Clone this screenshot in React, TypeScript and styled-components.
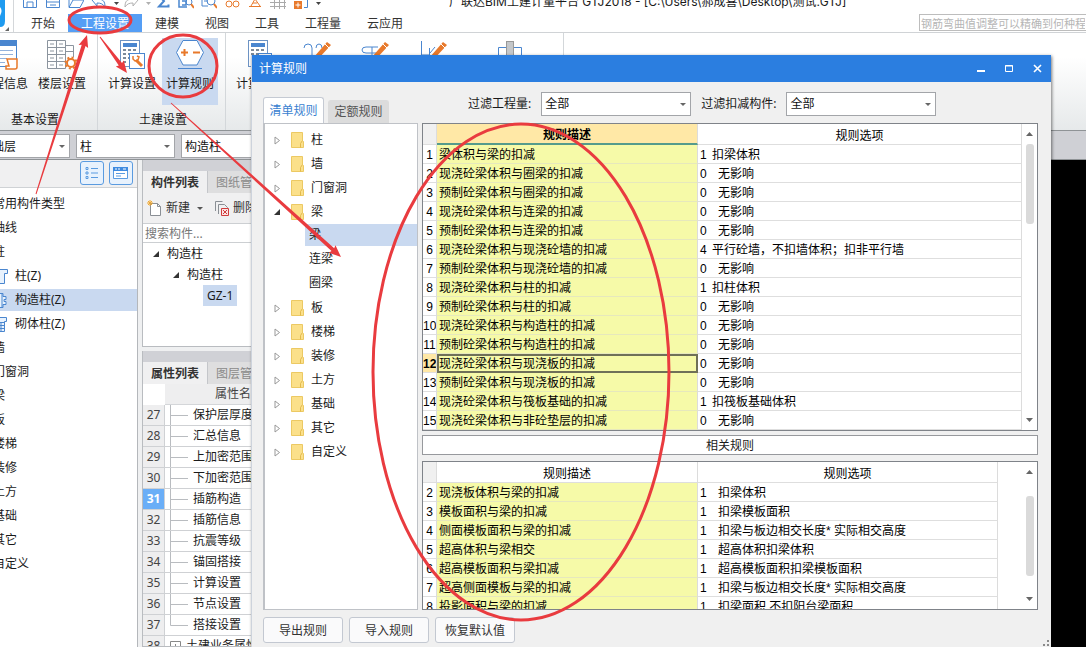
import React from 'react';
import styled, { createGlobalStyle, css } from 'styled-components';

const GlobalStyle = createGlobalStyle`
  * { box-sizing: border-box; }
  body { margin: 0; background: #000; }
  body, button, input, select {
    font-family: "Noto Sans", "Noto Sans CJK SC", sans-serif;
    font-size: 12px;
    line-height: 16px;
    color: #1a1a1a;
  }
  button { border: 0; padding: 0; margin: 0; background: none; white-space: nowrap; }
  ul { list-style: none; margin: 0; padding: 0; }
  svg { display: block; flex: none; }
`;

const blue = '#4a86cf';
const orange = '#e8792b';

/* ---------- main window ---------- */

const Desktop = styled.div`
  position: relative;
  display: flex;
  flex-direction: column;
  height: 100vh;
  overflow: hidden;
  background: #fff;
`;

const TopArea = styled.header`
  display: flex;
  flex: none;
  border-bottom: 1px solid #d0d3d6;
`;

const LogoCell = styled.div`
  width: 14px;
  flex: none;
  border-right: 1px solid #d4d7da;
`;

const TopRows = styled.div`
  flex: 1;
  min-width: 0;
`;

const CaptionRow = styled.div`
  display: flex;
  align-items: flex-end;
  height: 14px;
  padding: 0 0 5px 8px;
  overflow: hidden;
`;

const QuickButton = styled.button<{ $caret?: boolean }>`
  width: ${p => (p.$caret ? 9 : 23)}px;
  height: 16px;
  flex: none;
`;

const Caption = styled.h1`
  margin: 0 0 0 124px;
  font-family: Inter, "Noto Sans CJK SC", sans-serif;
  font-size: 12px;
  font-weight: 400;
  line-height: 14px;
  white-space: nowrap;
`;

const MenuRow = styled.div`
  display: flex;
  height: 18px;
  padding-left: 4px;
`;

const MenuTab = styled.button<{ $active?: boolean }>`
  padding: 2px 13px 0;
  color: ${p => (p.$active ? '#fff' : '#333')};
  background: ${p => (p.$active ? '#559ef5' : 'transparent')};
`;

const HelpSearch = styled.input`
  width: 167px;
  height: 17px;
  margin-left: auto;
  padding: 1px 1px 0;
  font-size: 11px;
  border: 1px solid #bdbdbd;
  border-right: 0;
  &::placeholder { color: #b5b5b5; opacity: 1; }
`;

const Ribbon = styled.div`
  display: flex;
  flex: none;
  height: 98px;
  background: linear-gradient(#fff 25%, #e6e9ea);
  border-bottom: 1px solid #8f9396;
`;

const RibbonGroup = styled.section<{ $cut?: boolean }>`
  display: flex;
  flex-direction: column;
  flex: none;
  align-items: center;
  padding: 5px 7px 0 ${p => (p.$cut ? 0 : 6)}px;
  margin-left: ${p => (p.$cut ? -24 : 0)}px;
  border-right: 1px solid #d3d7da;
`;

const RibbonItems = styled.div`
  display: flex;
  gap: 2px;
`;

const RibbonItem = styled.button<{ $active?: boolean; $wide?: boolean }>`
  display: flex;
  flex-direction: column;
  align-items: center;
  gap: 6px;
  width: ${p => (p.$wide ? 92 : 56)}px;
  height: 67px;
  padding-top: 1px;
  background: ${p => (p.$active ? '#c9d9f0' : 'transparent')};
`;

const GroupName = styled.span`
  margin-top: 7px;
  padding-left: 4px;
`;

const FilterBar = styled.div`
  display: flex;
  flex: none;
  gap: 6px;
  height: 29px;
  padding: 3px 0 2px;
  margin-left: -24px;
  background: #cfd0d5;
  border-bottom: 1px solid #8f9396;
`;

const SelectBox = styled.span<{ $width: number }>`
  position: relative;
  display: block;
  flex: none;
  width: ${p => p.$width}px;
  height: 24px;
  select {
    width: 100%;
    height: 100%;
    padding: 1px 3px 0;
    appearance: none;
    color: #111;
    background: #fff;
    border: 1px solid #a3a5a9;
    border-radius: 0;
  }
  svg {
    position: absolute;
    right: 5px;
    top: 11px;
    pointer-events: none;
  }
`;

const Workspace = styled.div`
  display: flex;
  flex: 1;
  min-height: 0;
  background: #000;
`;

/* ---------- component type column ---------- */

const TypePanel = styled.nav`
  width: 138px;
  flex: none;
  overflow: hidden;
  background: #fff;
  border-right: 1px solid #b4b7bb;
`;

const TypeTools = styled.div`
  display: flex;
  justify-content: flex-end;
  gap: 5px;
  height: 28px;
  padding: 1px 4px 0 0;
  background: #f0f0f1;
  border-bottom: 1px solid #cfd2d5;
`;

const ToggleView = styled.button`
  display: grid;
  place-items: center;
  width: 24px;
  height: 24px;
  background: #e8f2fd;
  border: 1px solid #5a9be0;
  border-radius: 3px;
`;

const TypeList = styled.ul`
  padding-top: 5px;
  margin-left: -7px;
`;

const TypeRow = styled.li<{ $active?: boolean }>`
  display: flex;
  align-items: center;
  gap: 6px;
  height: 22px;
  margin-bottom: 2px;
  white-space: nowrap;
  background: ${p => (p.$active ? '#c9d9f0' : 'transparent')};
`;

/* ---------- component list and property columns ---------- */

const Docks = styled.div`
  display: flex;
  flex-direction: column;
  width: 190px;
  flex: none;
  gap: 4px;
  padding-left: 4px;
  background: #eff0f1;
`;

const Dock = styled.section<{ $grow?: boolean }>`
  flex: ${p => (p.$grow ? '1' : 'none')};
  height: ${p => (p.$grow ? 'auto' : '187px')};
  min-height: 0;
  overflow: hidden;
  background: #fff;
  border: 1px solid #b9bcc0;
  border-top: 0;
`;

const DockTabs = styled.div`
  display: flex;
  height: 33px;
  padding-top: 11px;
  background: #d0d1d6;
`;

const DockTab = styled.button<{ $active?: boolean }>`
  padding: 2px 8px 0;
  line-height: 20px;
  font-weight: ${p => (p.$active ? 700 : 400)};
  color: ${p => (p.$active ? '#333' : '#8a8a8a')};
  background: ${p => (p.$active ? '#f0f0f1' : '#dededf')};
  border-right: 1px solid #c4c6ca;
`;

const DockTools = styled.div`
  display: flex;
  align-items: center;
  gap: 5px;
  height: 31px;
  padding-left: 4px;
  background: #f0f0f1;
  border-bottom: 1px solid #cccfd2;
`;

const DockTool = styled.button`
  display: flex;
  align-items: center;
  gap: 4px;
  margin-right: 2px;
  color: #333;
`;

const DockSearch = styled.input`
  display: block;
  width: 100%;
  height: 19px;
  padding: 0 2px;
  border: 0;
  border-bottom: 1px solid #cccfd2;
  &::placeholder { color: #777; opacity: 1; }
`;

const PartTree = styled.ul``;

const PartRow = styled.li<{ $level: number }>`
  display: flex;
  align-items: center;
  gap: 8px;
  height: 21px;
  padding-left: ${p => 10 + p.$level * 20}px;
  white-space: nowrap;
`;

const PartName = styled.span<{ $active?: boolean }>`
  ${p => p.$active && css`
    margin-left: 2px;
    padding: 0 4px;
    line-height: 21px;
    background: #c9d9f0;
  `}
`;

const PropTable = styled.table`
  width: 100%;
  table-layout: fixed;
  border-spacing: 0;
  white-space: nowrap;
  th, td { padding: 0; font-weight: 400; text-align: left; overflow: hidden; }
  thead th { line-height: 20px; }
  thead th + th { padding-left: 50px; color: #444; background: #eeeeef; border-bottom: 1px solid #d4d6d9; }
  tbody td { line-height: 20px; border-bottom: 1px solid #cfd1d4; }
`;

const PropIndex = styled.th<{ $active?: boolean }>`
  && {
    line-height: 20px;
    text-align: center;
    color: ${p => (p.$active ? '#fff' : '#444')};
    font-weight: ${p => (p.$active ? 700 : 400)};
    background: ${p => (p.$active ? '#6aaef7' : '#eeeeef')};
    border-right: 1px solid #cfd1d4;
    border-bottom: 1px solid #cfd1d4;
  }
`;

const PropName = styled.span`
  display: flex;
  align-items: center;
  gap: 5px;
  height: 20px;
  padding-left: 5px;
`;

/* ---------- rule dialog ---------- */

const Dialog = styled.div`
  position: absolute;
  left: 251px;
  right: 35px;
  top: 55px;
  bottom: 0;
  display: flex;
  flex-direction: column;
  background: #f0f0f0;
  border-left: 1px solid #cdd3dc;
  box-shadow: 1px 1px 3px rgba(0, 0, 0, 0.5);
`;

const DialogBar = styled.div`
  display: flex;
  align-items: center;
  flex: none;
  height: 27px;
  padding-left: 7px;
  background: #2b7ee0;
`;

const DialogTitle = styled.h2`
  flex: 1;
  margin: 0;
  font-size: 12px;
  font-weight: 400;
  color: #fff;
`;

const WindowButton = styled.button`
  display: grid;
  place-items: center;
  width: 28px;
  height: 27px;
`;

const DialogBody = styled.div`
  display: grid;
  grid-template-columns: 155px minmax(0, 1fr);
  grid-template-rows: 41px minmax(0, 1fr);
  column-gap: 4px;
  flex: 1;
  min-height: 0;
  padding: 0 13px 0 11px;
`;

const RuleTabs = styled.div`
  display: flex;
  align-items: flex-end;
  gap: 4px;
`;

const RuleTab = styled.button<{ $active?: boolean }>`
  width: 61px;
  height: ${p => (p.$active ? 26 : 23)}px;
  color: ${p => (p.$active ? '#3a7fd0' : '#555')};
  background: ${p => (p.$active ? '#fff' : '#dcdcdc')};
  border: 1px solid ${p => (p.$active ? '#c5cad3' : '#dcdcdc')};
  border-bottom: 0;
  border-radius: 3px 3px 0 0;
`;

const Filters = styled.div`
  display: flex;
  align-items: center;
  gap: 10px;
  padding: 2px 0 0 46px;
  white-space: nowrap;
`;

const RuleTree = styled.ul`
  padding-top: 4px;
  background: #fff;
  border: 1px solid #bfc2c7;
  border-left-width: 2px;
  overflow: hidden;
`;

const RuleNode = styled.li`
  display: flex;
  align-items: center;
  height: 24px;
  padding-left: 9px;
`;

const Expander = styled.span`
  width: 7px;
  margin-right: 10px;
`;

const NodeName = styled.span`
  margin-left: 7px;
`;

const RuleLeaf = styled.li<{ $active?: boolean }>`
  height: 22px;
  margin: 0 0 2px 40px;
  padding-left: 4px;
  line-height: 22px;
  background: ${p => (p.$active ? '#c9d9f0' : 'transparent')};
`;

const RuleArea = styled.div`
  display: flex;
  flex-direction: column;
  min-height: 0;
`;

const GridFrame = styled.div<{ $grow?: boolean }>`
  display: flex;
  flex: ${p => (p.$grow ? '1' : 'none')};
  min-height: 0;
  overflow: hidden;
  background: #fff;
  border: 1px solid #7f8389;
`;

const GridView = styled.div<{ $inset?: boolean }>`
  flex: 1;
  min-width: 0;
  padding-right: ${p => (p.$inset ? 24 : 0)}px;
`;

const RuleTable = styled.table`
  width: 100%;
  table-layout: fixed;
  border-spacing: 0;
  font-family: "Liberation Sans", "Noto Sans CJK SC", sans-serif;
  color: #000;
  white-space: nowrap;
  th, td {
    padding: 2px 0 0;
    overflow: hidden;
    line-height: 16px;
    font-weight: 400;
    text-align: left;
    border-right: 1px solid #dcdcdc;
    border-bottom: 1px solid #dedede;
  }
  thead th { height: 21px; padding-top: 4px; text-align: center; }
  thead th:first-child { background: #f0f0f0; }
`;

const DescHead = styled.th<{ $active?: boolean }>`
  ${p => p.$active && css`
    && {
      padding-top: 3px;
      font-weight: 700;
      background: #ffe8a6;
      border-bottom: 2px solid #559b8c;
    }
  `}
`;

const RowIndex = styled.th<{ $active?: boolean }>`
  && {
    text-align: center;
    font-weight: ${p => (p.$active ? 700 : 400)};
    background: ${p => (p.$active ? '#ffe8a6' : '#fff')};
  }
`;

const DescCell = styled.td<{ $active?: boolean }>`
  && {
    padding-left: 2px;
    background: #f6faa8;
    border-bottom-color: #e6e8bd;
    outline: ${p => (p.$active ? '2px solid #6f7058' : 'none')};
    outline-offset: -2px;
  }
`;

const OptionCell = styled.td`
  && { padding-left: 2px; }
`;

const OptionCode = styled.span<{ $narrow?: boolean }>`
  display: inline-block;
  width: ${p => (p.$narrow ? 12 : 18)}px;
`;

const ScrollTrack = styled.div`
  display: flex;
  flex-direction: column;
  align-items: center;
  width: 15px;
  flex: none;
  padding: 7px 0;
`;

const ScrollThumb = styled.div<{ $offset: number }>`
  width: 8px;
  height: 80px;
  margin: ${p => p.$offset}px 0 auto;
  background: #dadada;
  border-radius: 3px;
`;

const RelatedTitle = styled.h3`
  flex: none;
  height: 20px;
  margin: 4px 0 6px;
  padding-top: 1px;
  font-size: 12px;
  font-weight: 400;
  line-height: 18px;
  text-align: center;
  background: #fff;
  border: 1px solid #97999d;
`;

const DialogFooter = styled.footer`
  display: flex;
  flex: none;
  gap: 6px;
  padding: 7px 0 4px 11px;
`;

const FooterButton = styled.button`
  width: 80px;
  height: 26px;
  padding-top: 1px;
  color: #333;
  background: #fafafb;
  border: 1px solid #c3c8d1;
  border-radius: 3px;
`;

const SizeGrip = styled.svg`
  margin: auto 1px -4px auto;
`;

const Notes = styled.svg`
  position: absolute;
  left: 0;
  top: 0;
  pointer-events: none;
`;

/* ---------- drawings ---------- */

const Down = ({ color = '#555' }: { color?: string }) => (
  <svg width="6" height="3" viewBox="0 0 6 3"><path d="M0 0h6L3 3z" fill={color} /></svg>
);

const ScrollArrow = ({ up }: { up?: boolean }) => (
  <svg width="7" height="5" viewBox="0 0 7 5"><path d={up ? 'M0 5h7L3.500 1z' : 'M0 0h7L3.500 4z'} fill="#666" /></svg>
);

const Corner = () => (
  <svg width="6" height="6" viewBox="0 0 6 6"><path d="M6 0v6H0z" fill="#333" /></svg>
);

const Folder = () => (
  <svg width="13" height="16" viewBox="0 0 13 16">
    <path d="M.5.5h11v8l1 1v6H.5z" fill="#fbe08a" stroke="#ecc963" />
    <path d="M9.500 15.500v-4l2-3" fill="none" stroke="#e3b94c" />
  </svg>
);

const quick: Array<{ label: string; art?: React.ReactNode; caret?: string }> = [
  { label: '保存', art: <path d="M1.500 0v14.500h13V0M5 14V9h6v5" fill="none" stroke={blue} /> },
  { label: '另存', art: <path d="M1.500 0v14.500h13V0M1 9h14M5 12h6" fill="none" stroke={blue} /> },
  { label: '打开', art: <path d="M1 14.500L5 7h11l-4 7.500zM1 14V2" fill="none" stroke={blue} /> },
  { label: '撤销', art: <path d="M1 7l5-4v3c6 0 8 2 8 8-2-3-4-4-8-4v3z" fill="none" stroke={blue} /> },
  { label: '撤销列表', caret: '#444' },
  { label: '恢复', art: <path d="M15 7l-5-4v3c-6 0-8 2-8 8 2-3 4-4 8-4v3z" fill="none" stroke="#b0b0b0" /> },
  { label: '恢复列表', caret: '#b0b0b0' },
  { label: '汇总', art: <path d="M13 3H4l5 5-5 5.500h9.500v-2" fill="none" stroke={blue} strokeWidth="2" /> },
  { label: '查看', art: <><path d="M1 0v14h8M4 8h4v4H4M11 2v4" fill="none" stroke={blue} strokeWidth="1.500" /><circle cx="11" cy="9" r="3" fill="none" stroke={blue} /><path d="M13 11l3 4" stroke={orange} strokeWidth="2" /></> },
  { label: '查找', art: <><path d="M1 0v13h6M3 8h4M14 0v6" fill="none" stroke={blue} /><circle cx="10" cy="8" r="4" fill="none" stroke={blue} /><path d="M13 11l3 4" stroke={orange} strokeWidth="2" /></> },
  { label: '三维', art: <><circle cx="5" cy="11" r="3" fill="none" stroke={orange} /><circle cx="12" cy="11" r="3" fill="none" stroke={orange} /><path d="M3 5h11" stroke={orange} /></> },
  { label: '测量', art: <path d="M2 13.500h12M4 13l4-7 5 7M6 10h4" fill="none" stroke={orange} /> },
  { label: '轴网', art: <path d="M0 9.500h16M0 13.500h16M4.500 4v12M9.500 4v12M14.500 4v12" stroke="#aaa" /> },
  { label: '新增', art: <><rect x="1" y="8" width="8" height="8" fill={orange} /><path d="M5 9.500v5M2.500 12h5" stroke="#fff" /><path d="M11 14.500h3.500V3" fill="none" stroke={blue} /></> },
  { label: '自定义工具栏', caret: '#444' },
];

const Calc = ({ children }: { children?: React.ReactNode }) => (
  <svg width="30" height="31" viewBox="0 0 30 31">
    <rect x="3.500" y="1.500" width="19" height="26" fill="#fff" stroke="#6d93c4" />
    <rect x="6" y="4" width="14" height="4" fill={blue} />
    <path d="M6 11h3m2 0h3m2 0h3M6 15h3m2 0h3M6 19h3m2 0h3M6 23h3" stroke="#7d8a99" strokeWidth="2" />
    {children}
  </svg>
);

const Pencil = ({ d }: { d: string }) => (
  <svg width="30" height="31" viewBox="0 0 30 31">
    <path d={d} fill="none" stroke={blue} />
    <path d="M11 18L24 3l4 3-13 14z" fill={orange} />
    <path d="M22 5l4 4" stroke="#fff" />
  </svg>
);

const ProjectInfo = () => (
  <svg width="36" height="31" viewBox="0 0 36 31">
    <rect x="8.500" y="1.500" width="22" height="26" fill="#fff" stroke={blue} />
    <path d="M8 4h23" stroke={blue} strokeWidth="6" />
    <path d="M11 11.500h16M11 15.500h16M11 19.500h10M11 23.500h8" stroke="#92b2dc" />
    <path d="M21 20h10v8a2 2 0 0 1-2 2h-9v-3h3z" fill="#fff" stroke={orange} strokeWidth="1.500" />
  </svg>
);

const FloorSettings = () => (
  <svg width="32" height="31" viewBox="0 0 32 31">
    <path d="M1.500 1.500h18v28h-18zM1.500 8.500h18M1.500 15.500h18M1.500 22.500h18M10.500 1v28M19.500 6.500h8V18M19.500 12.500h8" fill="#fff" stroke="#8b949e" />
    <path d="M4 5h4m5 0h4M4 12h4m5 0h4M4 19h4m5 0h4M4 26h4m5 0h4" stroke="#8b949e" />
    <circle cx="25" cy="24" r="4" fill="#fff" stroke={orange} strokeWidth="2" />
    <circle cx="25" cy="24" r="5.500" fill="none" stroke={orange} strokeWidth="2" strokeDasharray="2 2.300" />
  </svg>
);

const RuleHexagon = () => (
  <svg width="30" height="31" viewBox="0 0 30 31">
    <path d="M8 1.500h14l6.500 12L22 26H8L1.500 13.500z" fill="#fff" stroke={blue} />
    <path d="M3 29.500h24" stroke={blue} />
    <path d="M6 13.500h7M9.500 10v7M18 13.500h7" stroke={orange} strokeWidth="2" />
  </svg>
);

const WallSection = () => (
  <svg width="26" height="31" viewBox="0 0 26 31">
    <path d="M1.500 30V8.500h23V30" fill="#fff" stroke={blue} />
    <rect x="9.500" y="2.500" width="7" height="27" fill="#c4c7ca" stroke="#999" />
  </svg>
);

const TypeIcon = ({ kind }: { kind: number }) => (
  <svg width="16" height="18" viewBox="0 0 16 18">
    {kind === 0 && <path d="M1 2.500h13.500v4h-3v10H4v-10H1z" fill="#e8f2fd" stroke={blue} />}
    {kind === 1 && <path d="M4 2.500h6v3h3v3h-2v2h2v3h-3v3H4zM9 2v14" fill="#e8f2fd" stroke={blue} />}
    {kind === 2 && <><path d="M1 2.500h12.500v4h-2v10H4v-10H1z" fill="#e8f2fd" stroke={blue} /><path d="M4 7.500h8m-8 3h8m-8 3h8M8 7v9" stroke={blue} /></>}
  </svg>
);

/* Annotation arrow that widens from its tail towards the head. */
const Arrow = ({ from, to }: { from: [number, number]; to: [number, number] }) => {
  const dx = to[0] - from[0];
  const dy = to[1] - from[1];
  const len = Math.hypot(dx, dy);
  const angle = (Math.atan2(dy, dx) * 180) / Math.PI;
  const neck = len - 11;
  return (
    <path
      transform={`translate(${from[0]} ${from[1]}) rotate(${angle})`}
      d={`M0 -0.500L${neck} -2L${neck - 1} -5L${len} 0L${neck - 1} 5L${neck} 2L0 0.500z`}
      fill="#e93b3f"
    />
  );
};

/* ---------- data ---------- */

const menus = ['开始', '工程设置', '建模', '视图', '工具', '工程量', '云应用'];

const types: Array<{ name: string; icon?: number; active?: boolean }> = [
  { name: '常用构件类型' }, { name: '轴线' }, { name: '柱' },
  { name: '柱(Z)', icon: 0 }, { name: '构造柱(Z)', icon: 1, active: true }, { name: '砌体柱(Z)', icon: 2 },
  { name: '墙' }, { name: '门窗洞' }, { name: '梁' }, { name: '板' }, { name: '楼梯' },
  { name: '装修' }, { name: '土方' }, { name: '基础' }, { name: '其它' }, { name: '自定义' },
];

const props = ['保护层厚度', '汇总信息', '上加密范围', '下加密范围', '插筋构造', '插筋信息', '抗震等级', '锚固搭接', '计算设置', '节点设置', '搭接设置'];

const nodes: Array<{ name: string; children?: string[] }> = [
  { name: '柱' }, { name: '墙' }, { name: '门窗洞' },
  { name: '梁', children: ['梁', '连梁', '圈梁'] },
  { name: '板' }, { name: '楼梯' }, { name: '装修' }, { name: '土方' }, { name: '基础' }, { name: '其它' }, { name: '自定义' },
];

type Rule = [number, string, string, string];

const rules: Rule[] = [
  [1, '梁体积与梁的扣减', '1', '扣梁体积'],
  [2, '现浇砼梁体积与圈梁的扣减', '0', '无影响'],
  [3, '预制砼梁体积与圈梁的扣减', '0', '无影响'],
  [4, '现浇砼梁体积与连梁的扣减', '0', '无影响'],
  [5, '预制砼梁体积与连梁的扣减', '0', '无影响'],
  [6, '现浇砼梁体积与现浇砼墙的扣减', '4', '平行砼墙，不扣墙体积；扣非平行墙'],
  [7, '预制砼梁体积与现浇砼墙的扣减', '0', '无影响'],
  [8, '现浇砼梁体积与柱的扣减', '1', '扣柱体积'],
  [9, '预制砼梁体积与柱的扣减', '0', '无影响'],
  [10, '现浇砼梁体积与构造柱的扣减', '0', '无影响'],
  [11, '预制砼梁体积与构造柱的扣减', '0', '无影响'],
  [12, '现浇砼梁体积与现浇板的扣减', '0', '无影响'],
  [13, '预制砼梁体积与现浇板的扣减', '0', '无影响'],
  [14, '现浇砼梁体积与筏板基础的扣减', '1', '扣筏板基础体积'],
  [15, '现浇砼梁体积与非砼垫层的扣减', '0', '无影响'],
];

const related: Rule[] = [
  [2, '现浇板体积与梁的扣减', '1', '扣梁体积'],
  [3, '模板面积与梁的扣减', '1', '扣梁模板面积'],
  [4, '侧面模板面积与梁的扣减', '1', '扣梁与板边相交长度* 实际相交高度'],
  [5, '超高体积与梁相交', '1', '超高体积扣梁体积'],
  [6, '超高模板面积与梁扣减', '1', '超高模板面积扣梁模板面积'],
  [7, '超高侧面模板与梁的扣减', '1', '扣梁与板边相交长度* 实际相交高度'],
  [8, '投影面积与梁的扣减', '1', '扣梁面积 不扣阳台梁面积'],
];

/* ---------- parts ---------- */

const Choice = ({ id, value, width, label }: { id: string; value: string; width: number; label?: string }) => (
  <SelectBox $width={width}>
    <select id={id} aria-label={label}><option>{value}</option></select>
    <Down color="#666" />
  </SelectBox>
);

const RuleGrid = ({ rows, current, inset, offset }: { rows: Rule[]; current?: number; inset?: boolean; offset: number }) => (
  <GridFrame $grow={inset}>
    <GridView $inset={inset}>
      <RuleTable>
        <colgroup><col width="14" /><col width="261" /><col /></colgroup>
        <thead>
          <tr>
            <th aria-label="序号" />
            <DescHead $active={current !== undefined}>规则描述</DescHead>
            <th>规则选项</th>
          </tr>
        </thead>
        <tbody>
          {rows.map(([n, desc, code, option]) => (
            <tr key={n}>
              <RowIndex $active={n === current}>{n}</RowIndex>
              <DescCell $active={n === current}>{desc}</DescCell>
              <OptionCell>
                <OptionCode $narrow={!inset && code !== '0'}>{code}</OptionCode>{option}
              </OptionCell>
            </tr>
          ))}
        </tbody>
      </RuleTable>
    </GridView>
    <ScrollTrack>
      <ScrollArrow up />
      <ScrollThumb $offset={offset} />
      <ScrollArrow />
    </ScrollTrack>
  </GridFrame>
);

const RuleDialog = () => (
  <Dialog role="dialog" aria-label="计算规则">
    <DialogBar>
      <DialogTitle>计算规则</DialogTitle>
      <WindowButton aria-label="最小化">
        <svg width="9" height="9" viewBox="0 0 9 9"><path d="M0 7h8" stroke="#fff" strokeWidth="2" /></svg>
      </WindowButton>
      <WindowButton aria-label="最大化">
        <svg width="9" height="9" viewBox="0 0 9 9"><path d="M.5 1.500h7v6h-7zM0 2h8" fill="none" stroke="#fff" /></svg>
      </WindowButton>
      <WindowButton aria-label="关闭">
        <svg width="9" height="9" viewBox="0 0 9 9"><path d="M1 1l7 7M8 1L1 8" stroke="#fff" strokeWidth="1.600" /></svg>
      </WindowButton>
    </DialogBar>
    <DialogBody>
      <RuleTabs>
        <RuleTab $active>清单规则</RuleTab>
        <RuleTab>定额规则</RuleTab>
      </RuleTabs>
      <Filters>
        <label htmlFor="quantity">过滤工程量:</label>
        <Choice id="quantity" value="全部" width={150} />
        <label htmlFor="deduct">过滤扣减构件:</label>
        <Choice id="deduct" value="全部" width={150} />
      </Filters>
      <RuleTree>
        {nodes.map(node => (
          <React.Fragment key={node.name}>
            <RuleNode>
              <Expander>
                {node.children ? <Corner /> : (
                  <svg width="7" height="9" viewBox="0 0 7 9"><path d="M1 1v7l4.500-3.500z" fill="#fff" stroke="#999" /></svg>
                )}
              </Expander>
              <Folder />
              <NodeName>{node.name}</NodeName>
            </RuleNode>
            {node.children?.map((leaf, i) => <RuleLeaf key={leaf} $active={i === 0}>{leaf}</RuleLeaf>)}
          </React.Fragment>
        ))}
      </RuleTree>
      <RuleArea>
        <RuleGrid rows={rules} current={12} offset={8} />
        <RelatedTitle>相关规则</RelatedTitle>
        <RuleGrid rows={related} inset offset={22} />
      </RuleArea>
    </DialogBody>
    <DialogFooter>
      <FooterButton>导出规则</FooterButton>
      <FooterButton>导入规则</FooterButton>
      <FooterButton>恢复默认值</FooterButton>
      <SizeGrip width="8" height="8" viewBox="0 0 8 8">
        <path d="M5 1h2v2H5zM1 5h2v2H1zM5 5h2v2H5z" fill="#8a8a8a" />
      </SizeGrip>
    </DialogFooter>
  </Dialog>
);

export default function App() {
  return (
    <Desktop>
      <GlobalStyle />
      <TopArea>
        <LogoCell>
          <svg width="10" height="32" viewBox="0 0 10 32">
            <path d="M0 0h5v21q0 6-5 6z" fill="#1f9bf0" />
            <path d="M0 7q3 3 0 9z" fill="#fff" />
            <path d="M9 27v4H5z" fill="#666" />
          </svg>
        </LogoCell>
        <TopRows>
          <CaptionRow>
            {quick.map(q => (
              <QuickButton key={q.label} aria-label={q.label} $caret={!!q.caret}>
                {q.caret ? (
                  <svg width="6" height="16" viewBox="0 0 6 16"><path d="M0 9h5l-2.500 3z" fill={q.caret} /></svg>
                ) : (
                  <svg width="16" height="16" viewBox="0 0 16 16">{q.art}</svg>
                )}
              </QuickButton>
            ))}
            <Caption>广联达BIM土建计量平台 GTJ2018 - [C:\Users\郝成喜\Desktop\测试.GTJ]</Caption>
          </CaptionRow>
          <MenuRow>
            {menus.map((m, i) => <MenuTab key={m} $active={i === 1}>{m}</MenuTab>)}
            <HelpSearch aria-label="搜索帮助" placeholder="钢筋弯曲值调整可以精确到何种程度" />
          </MenuRow>
        </TopRows>
      </TopArea>

      <Ribbon>
        <RibbonGroup $cut>
          <RibbonItems>
            <RibbonItem><ProjectInfo />工程信息</RibbonItem>
            <RibbonItem><FloorSettings />楼层设置</RibbonItem>
          </RibbonItems>
          <GroupName>基本设置</GroupName>
        </RibbonGroup>
        <RibbonGroup>
          <RibbonItems>
            <RibbonItem>
              <Calc>
                <rect x="12.500" y="14.500" width="15" height="15" fill="#fff" stroke={blue} />
                <path d="M19 21l6 6" stroke={orange} strokeWidth="3" />
                <path d="M16 17v3l2 2 3-1 1-3-2-1" fill="none" stroke={orange} strokeWidth="1.500" />
              </Calc>
              计算设置
            </RibbonItem>
            <RibbonItem $active><RuleHexagon />计算规则</RibbonItem>
          </RibbonItems>
          <GroupName>土建设置</GroupName>
        </RibbonGroup>
        <RibbonGroup>
          <RibbonItems>
            <RibbonItem>
              <Calc><rect x="13.500" y="14.500" width="13" height="15" fill="#fff" stroke={blue} /></Calc>
              计算设置
            </RibbonItem>
            <RibbonItem aria-label="比重设置"><Pencil d="M1 9q0-4 4-4t4 4v12M13 9q0-4 3-4t3 4" /></RibbonItem>
            <RibbonItem aria-label="弯钩设置"><Pencil d="M17 8H5q-4 0-4 3t4 3h14M11 8v8" /></RibbonItem>
            <RibbonItem aria-label="损耗设置"><Pencil d="M2.500 2v14h8V9M11 14l5-6" /></RibbonItem>
            <RibbonItem $wide aria-label="弯曲调整值设置"><WallSection /></RibbonItem>
          </RibbonItems>
        </RibbonGroup>
      </Ribbon>

      <FilterBar>
        <Choice id="floor" label="楼层" value="基础层" width={94} />
        <Choice id="category" label="构件类别" value="柱" width={99} />
        <Choice id="kind" label="构件类型" value="构造柱" width={99} />
      </FilterBar>

      <Workspace>
        <TypePanel>
          <TypeTools>
            <ToggleView aria-label="列表视图">
              <svg width="14" height="14" viewBox="0 0 14 14">
                <path d="M1 1.500h2v2H1zM1 6h2v2H1zM1 10.500h2v2H1zM6 2.500h7M6 7h7M6 11.500h7" fill="none" stroke="#5a9be0" />
              </svg>
            </ToggleView>
            <ToggleView aria-label="窗口视图">
              <svg width="16" height="14" viewBox="0 0 16 14">
                <path d="M.5 1.500h14v11H.5z" fill="#fff" stroke="#5a9be0" />
                <path d="M0 3h15" stroke="#3f8be0" strokeWidth="4" />
                <path d="M2 3h2m1 0h2m3 0h3" stroke="#fff" />
                <path d="M3 7.500h9M3 10h5" stroke="#5a9be0" />
              </svg>
            </ToggleView>
          </TypeTools>
          <TypeList>
            {types.map(t => (
              <TypeRow key={t.name} $active={t.active}>
                {t.icon !== undefined && <TypeIcon kind={t.icon} />}
                {t.name}
              </TypeRow>
            ))}
          </TypeList>
        </TypePanel>

        <Docks>
          <Dock>
            <DockTabs>
              <DockTab $active>构件列表</DockTab>
              <DockTab>图纸管理</DockTab>
            </DockTabs>
            <DockTools>
              <DockTool>
                <svg width="15" height="16" viewBox="0 0 15 16">
                  <path d="M3.500 3.500h7l3 3v9h-10z" fill="#fff" stroke="#8a8f95" />
                  <path d="M10.500 3.500v3h3" fill="none" stroke="#8a8f95" />
                  <path d="M3 0v6M0 3h6M1 1l4 4M5 1L1 5" stroke="#f0a830" />
                </svg>
                新建
              </DockTool>
              <Down />
              <DockTool>
                <svg width="21" height="16" viewBox="-6 0 21 16">
                  <path d="M1.500 11V1.500h7M4.500 14V4.500h6l3 3V9" fill="none" stroke="#8a8f95" />
                  <path d="M7.500 8.500h7v7h-7z" fill="#fbe3e3" stroke="#d03c3c" />
                  <path d="M9 10l4 4M13 10l-4 4" stroke="#d03c3c" />
                </svg>
                删除
              </DockTool>
            </DockTools>
            <DockSearch aria-label="搜索构件" placeholder="搜索构件..." />
            <PartTree>
              <PartRow $level={0}><Corner /><PartName>构造柱</PartName></PartRow>
              <PartRow $level={1}><Corner /><PartName>构造柱</PartName></PartRow>
              <PartRow $level={2}><span /><PartName $active>GZ-1</PartName></PartRow>
            </PartTree>
          </Dock>
          <Dock $grow>
            <DockTabs>
              <DockTab $active>属性列表</DockTab>
              <DockTab>图层管理</DockTab>
            </DockTabs>
            <PropTable>
              <colgroup><col width="22" /><col /></colgroup>
              <thead>
                <tr><th aria-label="序号" /><th>属性名称</th></tr>
              </thead>
              <tbody>
                {props.map((name, i) => (
                  <tr key={name}>
                    <PropIndex $active={i === 4}>{27 + i}</PropIndex>
                    <td>
                      <PropName>
                        <svg width="18" height="21" viewBox="0 0 18 21">
                          <path d={i === props.length - 1 ? 'M.5 0v10.500H18' : 'M.5 0v21M0 10.500h18'} fill="none" stroke="#b9bcc0" />
                        </svg>
                        {name}
                      </PropName>
                    </td>
                  </tr>
                ))}
                <tr>
                  <PropIndex>38</PropIndex>
                  <td>
                    <PropName>
                      <svg width="11" height="11" viewBox="0 0 11 11"><path d="M.5.5h10v10H.5zM3 5.500h5M5.500 3v5" fill="#fff" stroke="#888" /></svg>
                      土建业务属性
                    </PropName>
                  </td>
                </tr>
              </tbody>
            </PropTable>
          </Dock>
        </Docks>
      </Workspace>

      <RuleDialog />

      <Notes width="1086" height="647" viewBox="0 0 1086 647" aria-hidden="true">
        <g fill="none" stroke="#e93b3f" strokeWidth="3">
          <ellipse cx="100" cy="20" rx="31" ry="13" />
          <ellipse cx="183" cy="66" rx="34" ry="31" />
          <ellipse cx="521" cy="372" rx="148" ry="248" />
        </g>
        <Arrow from={[36, 194]} to={[87, 35]} />
        <Arrow from={[100, 37]} to={[127, 73]} />
        <Arrow from={[171, 103]} to={[341, 257]} />
      </Notes>
    </Desktop>
  );
}
